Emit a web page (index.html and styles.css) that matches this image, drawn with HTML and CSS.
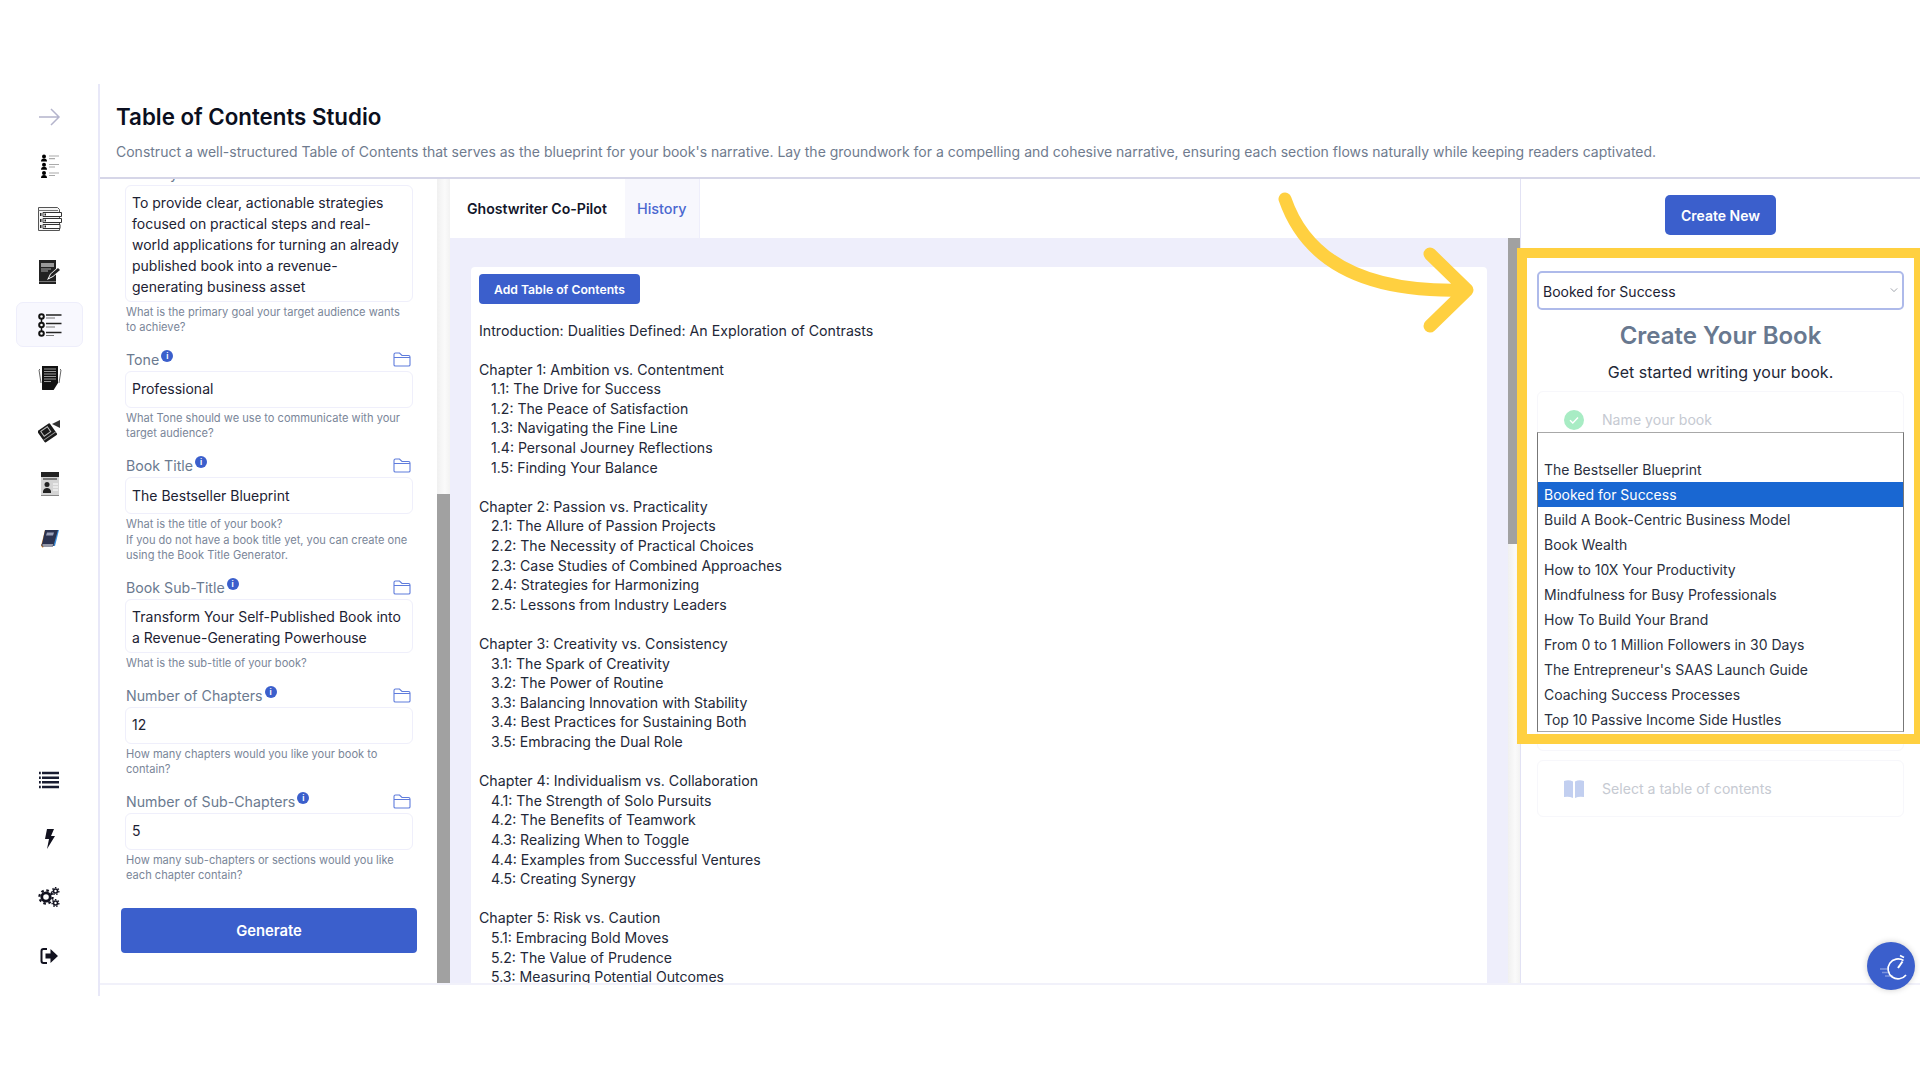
FILE: index.html
```html
<!DOCTYPE html>
<html lang="en">
<head>
<meta charset="utf-8">
<title>Table of Contents Studio</title>
<link rel="stylesheet" href="styles.css">
</head>
<body>
<div class="page">
  <div class="app">
    <nav class="sidebar">
      <div class="nav-top">
        <div class="nav-arrow"><svg class="ic" viewBox="0 0 24 24"><path d="M2 12H22M14 4l8 8-8 8" fill="none" stroke="#b4b4cc" stroke-width="1.5"/></svg></div>
        <div class="nav-item"><svg class="ic" viewBox="0 0 24 24"><g><circle cx="6" cy="2.6" r="2"/><path d="M3 7.6q0-3 3-3t3 3z"/></g><g transform="translate(0 8.2)"><circle cx="6" cy="2.6" r="2"/><path d="M3 7.6q0-3 3-3t3 3z"/></g><g transform="translate(0 16.4)"><circle cx="6" cy="2.6" r="2"/><path d="M3 7.6q0-3 3-3t3 3z"/></g><path d="M11 2h10M11 4.6h6M11 10.5h10M11 13h6M11 19h10M11 21.5h6" stroke="#aaa" stroke-width="1.2"/></svg></div>
        <div class="nav-item"><svg class="ic" viewBox="0 0 24 24"><path d="M.5 .5h19l2 2v21H.5z" fill="#f4f4f4" stroke="#555"/><path d="M.5 3.5H20" stroke="#777"/><path d="M5 5.500h18.500v4H5zM5 11.500h18.500v4H5zM5 17.500h17v4H5z" fill="#fff" stroke="#333"/><path d="M2 6h1.500v3H2zM2 12h1.500v3H2zM2 18h1.500v3H2zM6.500 6.500h1.500v2H6.500zM6.500 12.500h1.500v2H6.500zM6.500 18.500h1.500v2H6.500z" fill="#222"/></svg></div>
        <div class="nav-item"><svg class="ic" viewBox="0 0 24 24"><path d="M1 0h17v24H1z" fill="#222"/><path d="M3 3h13v4H3z" fill="#999"/><path d="M3 9h10M3 11h7" stroke="#aaa" stroke-width="1.2"/><path d="M1 21.500h17" stroke="#777"/><path d="M9 20l3-6 8-7 3 3-8 7z" fill="#fff"/><path d="M11 18l2-4 7-6 2 2-7 6z" fill="#222"/></svg></div>
        <div class="nav-item nav-active"><svg class="ic" viewBox="0 0 24 24"><path d="M3.500 3v18" stroke="#111" stroke-width="1.500"/><circle cx="3.500" cy="3.500" r="2.300" fill="#fff" stroke="#111" stroke-width="2"/><circle cx="3.500" cy="12" r="2.300" fill="#fff" stroke="#111" stroke-width="2"/><circle cx="3.500" cy="20.500" r="2.300" fill="#fff" stroke="#111" stroke-width="2"/><path d="M8 2h15.500M8 10.500h15.500M8 19.500h15.500" stroke="#222" stroke-width="1.300"/><path d="M8 5h9M8 14h9M8 22.500h8" stroke="#777" stroke-width="1.200"/></svg></div>
        <div class="nav-item"><svg class="ic" viewBox="0 0 24 24"><path d="M2 3L1 4l2 13M22 3l1 1-2 13" fill="none" stroke="#666"/><path d="M4 0h16v17l-5 8H6q-2 0-2-2z" fill="#111"/><path d="M6 3h12M6 5.500h12M6 8h12M6 10.500h12M6 13h12M6 15.500h7" stroke="#999" stroke-width="1.200"/></svg></div>
        <div class="nav-item"><svg class="ic" viewBox="0 0 24 24"><g transform="rotate(-35 10 14)"><rect x="2" y="6.500" width="15" height="14" rx="1" fill="#1a1a1a"/><rect x="5" y="8.500" width="8" height="6" fill="none" stroke="#bbb"/><path d="M2 17.500h15" stroke="#999"/></g><path d="M14 5l8-4v8z" fill="#333"/></svg></div>
        <div class="nav-item"><svg class="ic" viewBox="0 0 24 24"><path d="M3 0h18v24H3z" fill="#d4d4d4"/><path d="M3 0h18v5H3z" fill="#222"/><path d="M3 24h18v-1H3z" fill="#888"/><path d="M5 7h14" stroke="#222"/><path d="M5 21v-2q1-3 4-3t4 3v2z" fill="#222"/><circle cx="9" cy="12.500" r="2.500" fill="#222"/><path d="M15 12h5M15 15h5M15 18h5" stroke="#fff"/></svg></div>
        <div class="nav-item nav-book"><svg class="ic" viewBox="0 0 24 24"><path d="M3 20l4-16h2L5 22z" fill="#e89030"/><path d="M19 4h2l-4 16h-2z" fill="#3a90e0"/><path d="M7 4h13l-4 14H4z" fill="#2c3350"/><path d="M9 6.500h7l-1 3H8z" fill="#9aa0b8"/><path d="M4 18h12l-1 2H4z" fill="#fff" stroke="#2c3350"/></svg></div>
      </div>
      <div class="nav-bottom">
        <div class="nav-item-low"><svg class="ic" viewBox="0 0 24 24"><path d="M5 5h17M5 9.700h17M5 14.300h17M5 19h17" stroke="#181c30" stroke-width="2.400"/><path d="M2 5h1.800M2 9.700h1.800M2 14.300h1.800M2 19h1.800" stroke="#181c30" stroke-width="2.400"/></svg></div>
        <div class="nav-item-low"><svg class="ic" viewBox="0 0 24 24"><path d="M10 2h7l-3 7h4l-8 13 2-10H8z" fill="#12121f"/></svg></div>
        <div class="nav-item-low"><svg class="ic" viewBox="0 0 24 24"><circle cx="9" cy="12" r="4.200" fill="none" stroke="#12121f" stroke-width="2.800"/><circle cx="9" cy="12" r="6.600" fill="none" stroke="#12121f" stroke-width="2.200" stroke-dasharray="2.600 2.600"/><circle cx="18.500" cy="6" r="2" fill="none" stroke="#12121f" stroke-width="1.600"/><circle cx="18.500" cy="6" r="3.400" fill="none" stroke="#12121f" stroke-width="1.300" stroke-dasharray="1.500 1.500"/><circle cx="18.500" cy="18" r="2" fill="none" stroke="#12121f" stroke-width="1.600"/><circle cx="18.500" cy="18" r="3.400" fill="none" stroke="#12121f" stroke-width="1.300" stroke-dasharray="1.500 1.500"/></svg></div>
        <div class="nav-item-low"><svg class="ic" viewBox="0 0 24 24"><path d="M10 5H6.500Q4.500 5 4.500 7v10q0 2 2 2H10" fill="none" stroke="#12121f" stroke-width="2"/><path d="M8.500 9.500h5V5l7.500 7-7.500 7v-4.500h-5z" fill="#12121f"/></svg></div>
      </div>
    </nav>

    <div class="main">
      <header class="head">
        <h1 class="title">Table of Contents Studio</h1>
        <p class="desc">Construct a well-structured Table of Contents that serves as the blueprint for your book's narrative. Lay the groundwork for a compelling and cohesive narrative, ensuring each section flows naturally while keeping readers captivated.</p>
      </header>

      <div class="panels">
        <section class="form-panel">
          <div class="form-scroll">
            <div class="form">
              <div class="field">
                <div class="label-row"><span class="label">Primary Goal</span></div>
                <div class="box">To provide clear, actionable strategies focused on practical steps and real-world applications for turning an already published book into a revenue-generating business asset</div>
                <div class="help">What is the primary goal your target audience wants to achieve?</div>
              </div>
              <div class="field">
                <div class="label-row"><span class="label">Tone</span><span class="info">i</span><svg class="folder" viewBox="0 0 18 15"><path d="M1 13V2.500Q1 1 2.500 1h4L9 3.500h6.500Q17 3.500 17 5v8q0 1-1.500 1h-13Q1 14 1 13zM1 5.500h16" fill="none" stroke="#5f7cdc" stroke-width="1.100"/></svg></div>
                <div class="box">Professional</div>
                <div class="help">What Tone should we use to communicate with your target audience?</div>
              </div>
              <div class="field">
                <div class="label-row"><span class="label">Book Title</span><span class="info">i</span><svg class="folder" viewBox="0 0 18 15"><path d="M1 13V2.500Q1 1 2.500 1h4L9 3.500h6.500Q17 3.500 17 5v8q0 1-1.500 1h-13Q1 14 1 13zM1 5.500h16" fill="none" stroke="#5f7cdc" stroke-width="1.100"/></svg></div>
                <div class="box">The Bestseller Blueprint</div>
                <div class="help">What is the title of your book?<br>If you do not have a book title yet, you can create one using the Book Title Generator.</div>
              </div>
              <div class="field">
                <div class="label-row"><span class="label">Book Sub-Title</span><span class="info">i</span><svg class="folder" viewBox="0 0 18 15"><path d="M1 13V2.500Q1 1 2.500 1h4L9 3.500h6.500Q17 3.500 17 5v8q0 1-1.500 1h-13Q1 14 1 13zM1 5.500h16" fill="none" stroke="#5f7cdc" stroke-width="1.100"/></svg></div>
                <div class="box">Transform Your Self-Published Book into a Revenue-Generating Powerhouse</div>
                <div class="help">What is the sub-title of your book?</div>
              </div>
              <div class="field">
                <div class="label-row"><span class="label">Number of Chapters</span><span class="info">i</span><svg class="folder" viewBox="0 0 18 15"><path d="M1 13V2.500Q1 1 2.500 1h4L9 3.500h6.500Q17 3.500 17 5v8q0 1-1.500 1h-13Q1 14 1 13zM1 5.500h16" fill="none" stroke="#5f7cdc" stroke-width="1.100"/></svg></div>
                <div class="box">12</div>
                <div class="help">How many chapters would you like your book to contain?</div>
              </div>
              <div class="field">
                <div class="label-row"><span class="label">Number of Sub-Chapters</span><span class="info">i</span><svg class="folder" viewBox="0 0 18 15"><path d="M1 13V2.500Q1 1 2.500 1h4L9 3.500h6.500Q17 3.500 17 5v8q0 1-1.500 1h-13Q1 14 1 13zM1 5.500h16" fill="none" stroke="#5f7cdc" stroke-width="1.100"/></svg></div>
                <div class="box">5</div>
                <div class="help">How many sub-chapters or sections would you like each chapter contain?</div>
              </div>
              <div class="btn-generate">Generate</div>
            </div>
          </div>
          <div class="scrollbar"><div class="track-fill form-track"></div><div class="thumb form-thumb"></div></div>
        </section>

        <section class="mid-panel">
          <div class="mid-body">
            <div class="tabs">
              <div class="tab tab-on">Ghostwriter Co-Pilot</div>
              <div class="tab tab-off">History</div>
            </div>
            <div class="mid-scroll">
              <div class="toc-card">
                <div class="btn-add">Add Table of Contents</div>
                <div class="toc">
                  <p>Introduction: Dualities Defined: An Exploration of Contrasts</p>
                  <p>Chapter 1: Ambition vs. Contentment</p>
                  <ul><li>1.1: The Drive for Success</li><li>1.2: The Peace of Satisfaction</li><li>1.3: Navigating the Fine Line</li><li>1.4: Personal Journey Reflections</li><li>1.5: Finding Your Balance</li></ul>
                  <p>Chapter 2: Passion vs. Practicality</p>
                  <ul><li>2.1: The Allure of Passion Projects</li><li>2.2: The Necessity of Practical Choices</li><li>2.3: Case Studies of Combined Approaches</li><li>2.4: Strategies for Harmonizing</li><li>2.5: Lessons from Industry Leaders</li></ul>
                  <p>Chapter 3: Creativity vs. Consistency</p>
                  <ul><li>3.1: The Spark of Creativity</li><li>3.2: The Power of Routine</li><li>3.3: Balancing Innovation with Stability</li><li>3.4: Best Practices for Sustaining Both</li><li>3.5: Embracing the Dual Role</li></ul>
                  <p>Chapter 4: Individualism vs. Collaboration</p>
                  <ul><li>4.1: The Strength of Solo Pursuits</li><li>4.2: The Benefits of Teamwork</li><li>4.3: Realizing When to Toggle</li><li>4.4: Examples from Successful Ventures</li><li>4.5: Creating Synergy</li></ul>
                  <p>Chapter 5: Risk vs. Caution</p>
                  <ul><li>5.1: Embracing Bold Moves</li><li>5.2: The Value of Prudence</li><li>5.3: Measuring Potential Outcomes</li></ul>
                </div>
              </div>
            </div>
          </div>
          <div class="scrollbar mid-bar"><div class="thumb mid-thumb"></div><div class="track-fill"></div></div>
        </section>

        <aside class="right-panel">
          <div class="btn-create">Create New</div>
          <div class="book-select"><span>Booked for Success</span><svg class="chev" viewBox="0 0 10 6"><path d="M1 1l4 4 4-4" fill="none" stroke="#8a8f99" stroke-width="1"/></svg></div>
          <h2 class="rp-title">Create Your Book</h2>
          <p class="rp-sub">Get started writing your book.</p>
          <div class="step step-name">
            <div class="step-row"><svg class="step-ic" viewBox="0 0 20 20"><circle cx="10" cy="10" r="10" fill="#a8ecc4"/><path d="M6 10.300l2.800 2.700L14 7.500" fill="none" stroke="#fff" stroke-width="1.400"/></svg><span>Name your book</span></div>
            <ul class="listbox">
              <li>The Bestseller Blueprint</li>
              <li class="sel">Booked for Success</li>
              <li>Build A Book-Centric Business Model</li>
              <li>Book Wealth</li>
              <li>How to 10X Your Productivity</li>
              <li>Mindfulness for Busy Professionals</li>
              <li>How To Build Your Brand</li>
              <li>From 0 to 1 Million Followers in 30 Days</li>
              <li>The Entrepreneur's SAAS Launch Guide</li>
              <li>Coaching Success Processes</li>
              <li>Top 10 Passive Income Side Hustles</li>
            </ul>
          </div>
          <div class="step step-toc">
            <div class="step-row"><svg class="step-ic" viewBox="0 0 20 18"><path d="M0 1q5-1.500 9 .5V18q-4-2-9-1zM20 1q-5-1.500-9 .5V18q4-2 9-1z" fill="#c2cff0"/></svg><span>Select a table of contents</span></div>
          </div>
        </aside>
      </div>
      <div class="foot"></div>
    </div>
  </div>

  <div class="highlight"></div>
  <svg class="callout" viewBox="0 0 240 150"><path d="M5 5Q38 101 187 96M150 60l37 36-37 36" fill="none" stroke="#ffd040" stroke-width="13" stroke-linecap="round" stroke-linejoin="round"/></svg>
  <div class="fab"><svg viewBox="0 0 48 48" class="fab-ic"><path d="M36.500 18.500A10 10 0 1 0 39 33" fill="none" stroke="#fff" stroke-width="1.600"/><path d="M31 26l4.500-6.500" stroke="#fff" stroke-width="2"/><path d="M33 13.500l4 2" stroke="#fff" stroke-width="1.600"/><path d="M13 27h9M15 30.500h8M18 34h8" stroke="#fff" stroke-opacity=".35" stroke-width="1.400"/></svg></div>
</div>
</body>
</html>
```
FILE: styles.css
```css
* { box-sizing: border-box; }
html, body { margin: 0; padding: 0; background: #fff; }
body { font-family: Inter, "Liberation Sans", sans-serif; color: #1c2233; }
p, h1, h2, ul { margin: 0; padding: 0; }
ul { list-style: none; }

.page { position: relative; width: 1920px; height: 1080px; overflow: hidden; padding-top: 84px; }
.app { display: flex; height: 912px; }

/* sidebar */
.sidebar { width: 100px; flex: none; border-right: 2px solid #e8e8f8; display: flex; flex-direction: column; justify-content: space-between; padding: 10px 0 11px; }
.nav-top, .nav-bottom { display: flex; flex-direction: column; }
.nav-arrow { height: 45px; display: flex; align-items: center; justify-content: center; }
.nav-item { height: 45px; margin-bottom: 8px; width: 67px; margin-left: 16px; display: flex; align-items: center; justify-content: center; border: 1px solid transparent; border-radius: 7px; }
.nav-arrow + .nav-item { margin-top: 4px; }
.nav-active { background: #f8f8fe; border-color: #eeeefb; }
.nav-book { padding-top: 3px; }
.nav-item-low { height: 58.500px; display: flex; align-items: center; justify-content: center; }
.ic { width: 24px; height: 24px; display: block; }

/* main */
.main { flex: 1; min-width: 0; display: flex; flex-direction: column; }
.head { height: 95px; flex: none; padding: 17px 16px 0; border-bottom: 2px solid #d6d6e8; }
.title { font-size: 22.300px; line-height: 32px; font-weight: 600; color: #0b0f20; }
.desc { font-size: 14px; line-height: 20px; margin-top: 9px; color: #6f7b8e; white-space: nowrap; }
.panels { flex: 1; min-height: 0; display: flex; }
.foot { flex: none; height: 13px; border-top: 2px solid #f1f1fa; }

/* scrollbars */
.scrollbar { width: 13px; flex: none; display: flex; flex-direction: column; }
.mid-bar { width: 12px; padding-top: 59px; }
.track-fill { flex: 1; background: linear-gradient(90deg, #f0f0f0, #fafafa 60%, #f2f2f2); }
.thumb { background: #a1a1a1; }
.form-track { flex: none; height: 315px; }
.form-thumb { flex: 1; }
.mid-thumb { height: 306px; flex: none; }

/* form */
.form-panel { width: 350px; flex: none; display: flex; }
.form-scroll { flex: 1; min-width: 0; overflow: hidden; }
.form { margin-top: -16.500px; padding: 0 24px 0 25px; }
.field { margin-bottom: 13.250px; }
.label-row { height: 22px; display: flex; align-items: center; padding: 0 2px 1px 1px; }
.label { font-size: 14.200px; color: #6b7a90; }
.info { width: 12px; height: 12px; border-radius: 50%; background: #3b5fcc; color: #fff; font-size: 8px; line-height: 12px; text-align: center; font-weight: 700; margin: -6.500px 0 0 2px; }
.folder { width: 18px; height: 15px; margin-left: auto; }
.box { min-height: 37px; border: 1.500px solid #efeffb; border-radius: 6px; padding: 6.500px 6px 3.500px; font-size: 14px; line-height: 21px; color: #1c2233; background: #fff; }
.help { font-size: 11.100px; line-height: 15.500px; color: #7a8699; padding: 3px 2px 0 1px; }
.btn-generate { margin: 24.250px 0 0 -4px; width: 296px; height: 45px; border-radius: 4px; background: #3b5fcc; color: #fff; font-size: 14.800px; font-weight: 600; display: flex; align-items: center; justify-content: center; }

/* middle */
.mid-panel { flex: 1; min-width: 0; display: flex; border-right: 1px solid #e2e2f4; }
.mid-body { flex: 1; min-width: 0; display: flex; flex-direction: column; }
.tabs { height: 59px; flex: none; display: flex; }
.tab { display: flex; align-items: center; }
.tab-on { width: 175px; padding-left: 17px; font-size: 14.100px; font-weight: 600; color: #12162a; }
.tab-off { width: 75px; padding-left: 12px; font-size: 14.400px; background: #f7f7fd; border-right: 1px solid #eeeefb; font-weight: 500; color: #4a68d0; }
.mid-scroll { flex: 1; min-height: 0; overflow: hidden; background: #eeeefb; padding: 29px 21px 0 21px; }
.toc-card { background: #fff; border-radius: 4px 4px 0 0; padding: 7px 8px 0 8px; height: 900px; }
.btn-add { width: 161px; height: 30px; border-radius: 4px; background: #3b5fcc; color: #fff; font-size: 12.200px; font-weight: 600; display: flex; align-items: center; justify-content: center; }
.toc { margin-top: 16.500px; font-size: 14.200px; line-height: 19.600px; color: #232838; }
.toc p:first-child { margin-bottom: 19.600px; }
.toc ul { margin-bottom: 19.600px; padding-left: 12px; font-size: 14.100px; }

/* right */
.right-panel { width: 399px; flex: none; padding: 16px 16px 0 16px; display: flex; flex-direction: column; align-items: stretch; }
.btn-create { align-self: center; width: 111px; height: 40px; border-radius: 5px; background: #3b5fcc; color: #fff; font-size: 14px; font-weight: 600; display: flex; align-items: center; justify-content: center; }
.book-select { margin-top: 36px; height: 39px; padding: 1px 4px 0; border: 2px solid #aebaea; border-radius: 5px; display: flex; align-items: center; justify-content: space-between; font-size: 14px; color: #1c2233; }
.chev { width: 8px; height: 6px; margin-top: -3px; }
.rp-title { font-size: 24px; line-height: 32px; font-weight: 600; text-align: center; color: #68788f; margin-top: 10px; }
.rp-sub { font-size: 16px; line-height: 22px; text-align: center; color: #232838; margin-top: 9px; }
.step { border: 1px solid #f7f7fb; border-radius: 6px; color: #c6cad2; font-size: 14.100px; }
.step-name { position: relative; margin-top: 8px; height: 360px; }
.step-toc { margin-top: 9px; height: 57px; }
.step-row { display: flex; align-items: center; padding-left: 26px; gap: 18px; height: 55px; }
.step-ic { width: 20px; height: 20px; flex: none; }
.listbox { position: absolute; left: -1px; right: -1px; top: 40px; height: 300px; padding-top: 24px; border: 1px solid #777; border-top-color: #a8a8a8; border-bottom-color: #a8a8a8; background: #fff; color: #2a3040; font-size: 14px; overflow: hidden; }
.listbox li { height: 25px; line-height: 25px; padding-left: 6px; }
.listbox .sel { background: #1967d2; color: #fff; }

/* overlays */
.highlight { position: absolute; left: 1517px; top: 248px; right: 0; height: 496px; border: 10px solid #ffd040; border-right-width: 6px; }
.callout { position: absolute; left: 1280px; top: 194px; width: 240px; height: 150px; overflow: visible; }
.fab { position: absolute; left: 1867px; top: 942px; width: 48px; height: 48px; border-radius: 50%; background: #3b5fcc; box-shadow: 0 0 6px rgba(0,0,0,.2); overflow: hidden; }
.fab-ic { width: 48px; height: 48px; display: block; }
```
